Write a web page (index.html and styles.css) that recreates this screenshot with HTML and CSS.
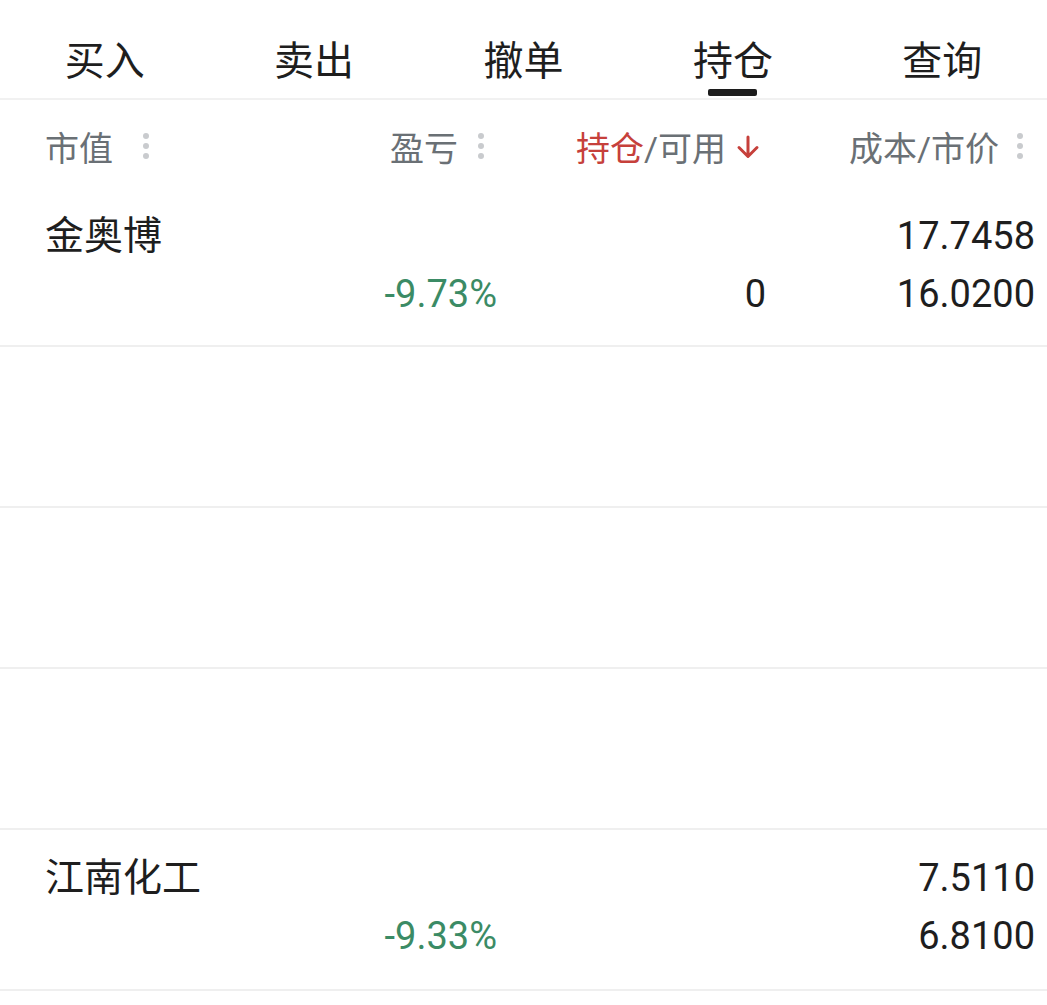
FILE: index.html
```html
<!DOCTYPE html>
<html lang="zh">
<head>
<meta charset="utf-8">
<link rel="stylesheet" href="styles.css">
</head>
<body>
<div class="page">
  <nav class="tabs">
    <div class="tab">买入</div>
    <div class="tab">卖出</div>
    <div class="tab">撤单</div>
    <div class="tab active">持仓</div>
    <div class="tab">查询</div>
  </nav>
  <div class="head grid">
    <div class="hc left">市值<span class="dots"><i></i><i></i><i></i></span></div>
    <div class="hc right c2">盈亏<span class="dots"><i></i><i></i><i></i></span></div>
    <div class="hc right c3"><span class="red">持仓</span>/可用<svg class="arrow" width="26" height="26" viewBox="0 0 26 26"><path d="M13 3 V22 M4 13.5 L13 22.5 L22 13.5" fill="none" stroke="#c6403b" stroke-width="3" stroke-linecap="round" stroke-linejoin="round"/></svg></div>
    <div class="hc right c4">成本/市价<span class="dots"><i></i><i></i><i></i></span></div>
  </div>
  <div class="row first grid">
    <div class="cell left"><div class="l1 name">金奥博</div><div class="l2"></div></div>
    <div class="cell right"><div class="l1"></div><div class="l2 green">-9.73%</div></div>
    <div class="cell right"><div class="l1"></div><div class="l2">0</div></div>
    <div class="cell right"><div class="l1">17.7458</div><div class="l2">16.0200</div></div>
  </div>
  <div class="row grid">
    <div class="cell left"><div class="l1"></div><div class="l2"></div></div>
    <div class="cell right"><div class="l1"></div><div class="l2"></div></div>
    <div class="cell right"><div class="l1"></div><div class="l2"></div></div>
    <div class="cell right"><div class="l1"></div><div class="l2"></div></div>
  </div>
  <div class="row grid">
    <div class="cell left"><div class="l1"></div><div class="l2"></div></div>
    <div class="cell right"><div class="l1"></div><div class="l2"></div></div>
    <div class="cell right"><div class="l1"></div><div class="l2"></div></div>
    <div class="cell right"><div class="l1"></div><div class="l2"></div></div>
  </div>
  <div class="row grid">
    <div class="cell left"><div class="l1"></div><div class="l2"></div></div>
    <div class="cell right"><div class="l1"></div><div class="l2"></div></div>
    <div class="cell right"><div class="l1"></div><div class="l2"></div></div>
    <div class="cell right"><div class="l1"></div><div class="l2"></div></div>
  </div>
  <div class="row grid">
    <div class="cell left"><div class="l1 name">江南化工</div><div class="l2"></div></div>
    <div class="cell right"><div class="l1"></div><div class="l2 green">-9.33%</div></div>
    <div class="cell right"><div class="l1"></div><div class="l2"></div></div>
    <div class="cell right"><div class="l1">7.5110</div><div class="l2">6.8100</div></div>
  </div>
</div>
</body>
</html>
```
FILE: styles.css
```css
* { box-sizing: border-box; }
html, body { margin: 0; padding: 0; background: #fff; }
body {
  font-family: Roboto, "Noto Sans CJK SC", sans-serif;
  color: #1e1e1e;
}
.page { width: 1047px; height: 1005px; overflow: hidden; }

.tabs {
  display: grid;
  grid-template-columns: repeat(5, 1fr);
  height: 100px;
  border-bottom: 2px solid #f1f1f1;
}
.tab {
  position: relative;
  text-align: center;
  font-size: 40px;
  line-height: 40px;
  padding-top: 42px;
  color: #1e1e1e;
}
.tab.active::after {
  content: "";
  position: absolute;
  left: 50%;
  margin-left: -25px;
  top: 89px;
  width: 49px;
  height: 7px;
  border-radius: 2px;
  background: #1c1c1c;
}

.grid {
  display: grid;
  grid-template-columns: 255px 197px 269px 269px;
  padding: 0 12px 0 45px;
}
.head {
  height: 88px;
  align-items: center;
  font-size: 34px;
  color: #6a7075;
  padding-top: 4px;
}
.hc { display: flex; align-items: center; white-space: nowrap; }
.hc.right { justify-content: flex-end; }
.c2 { padding-right: 13px; }
.c3 { padding-right: 5px; }
.c4 { padding-right: 12px; }
.red { color: #c6403b; }
.arrow {
  display: block;
  margin-left: 9px;
  margin-top: 2px;
}
.dots {
  display: inline-flex;
  flex-direction: column;
  gap: 4px;
  margin-left: 30px;
}
.c2 .dots { margin-left: 20px; }
.c4 .dots { margin-left: 18px; }
.dots i {
  display: block;
  width: 6px;
  height: 6px;
  border-radius: 50%;
  background: #c9cbce;
}

.row {
  height: 161px;
  padding-top: 19px;
  border-bottom: 2px solid #efefef;
}
.row.first { height: 159px; }
.cell { font-size: 38px; }
.cell.right { text-align: right; }
.l1, .l2 { height: 58px; line-height: 58px; white-space: nowrap; }
.name { font-size: 39px; }
.green { color: #3b8b65; }
```
